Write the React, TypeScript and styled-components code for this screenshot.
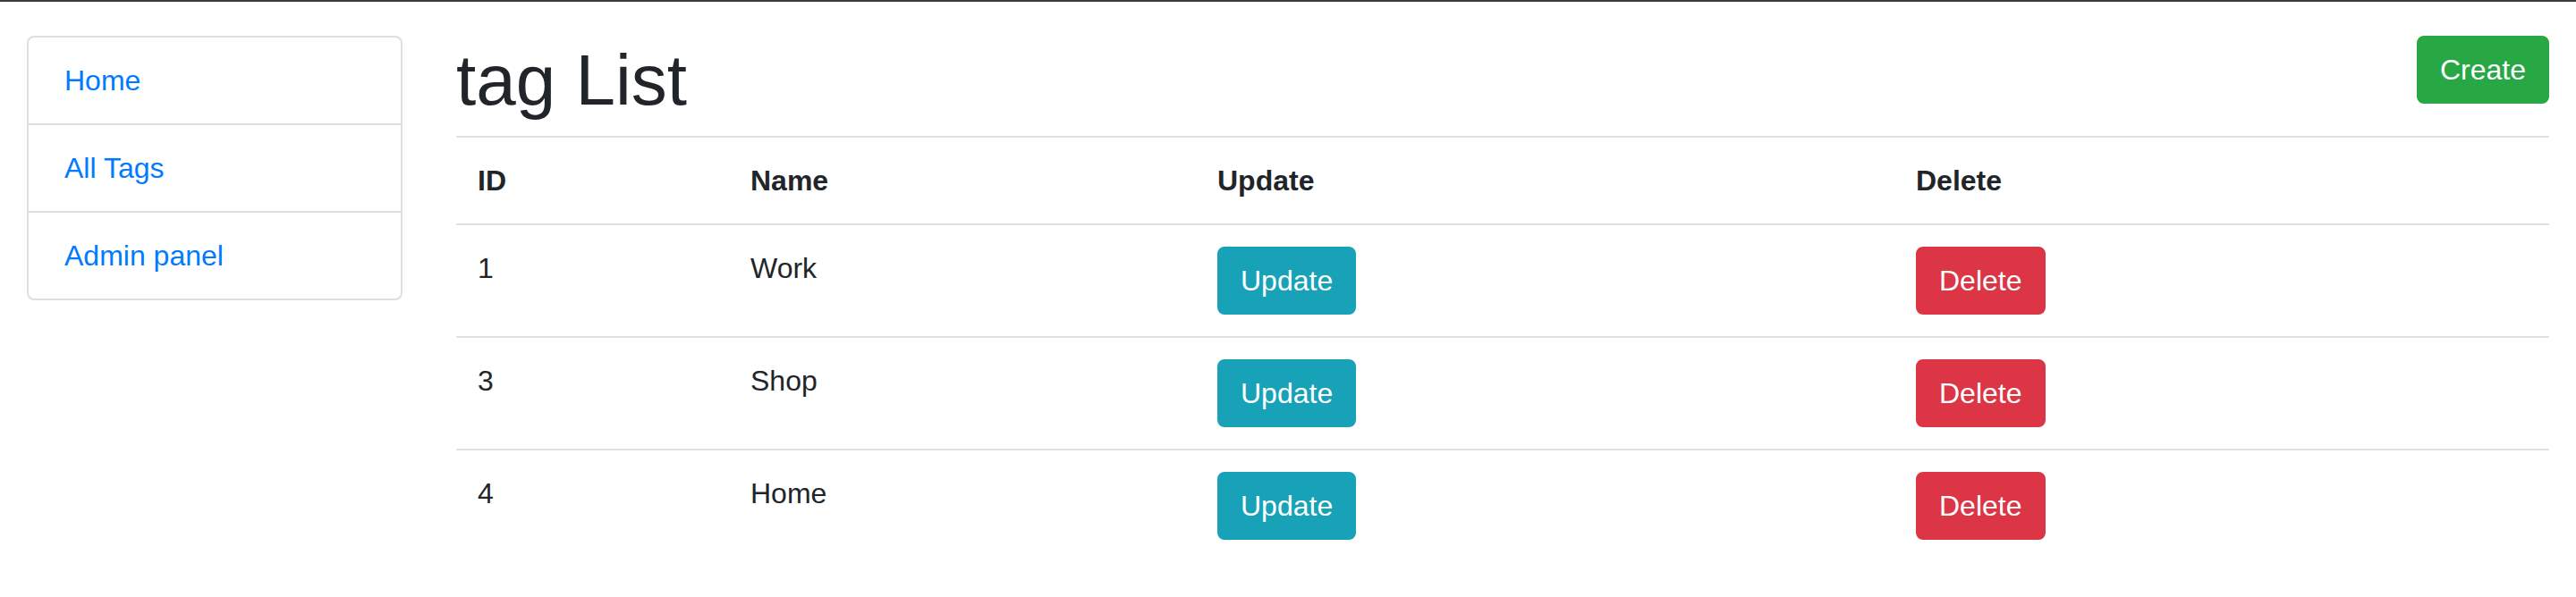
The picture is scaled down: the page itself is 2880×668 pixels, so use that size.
import React from "react";
import styled, { createGlobalStyle } from "styled-components";

const GlobalStyle = createGlobalStyle`
  html, body {
    margin: 0;
    padding: 0;
    background: #ffffff;
  }
  body {
    font-family: "Liberation Sans", Arial, sans-serif;
    font-size: 32px;
    line-height: 1.5;
    color: #212529;
  }
  * { box-sizing: border-box; }
`;

const TopLine = styled.div`
  height: 2px;
  background: #3a3a3a;
`;

const Container = styled.div`
  display: flex;
  align-items: flex-start;
  gap: 60px;
  padding: 38px 30px 0 30px;
`;

const Sidebar = styled.nav`
  width: 420px;
  flex: 0 0 420px;
  display: flex;
  flex-direction: column;
  border: 2px solid #dfdfdf;
  border-radius: 8px;
`;

const NavItem = styled.a<{ $last?: boolean }>`
  display: block;
  padding: 24px 40px;
  line-height: 48px;
  font-size: 32px;
  color: #007bff;
  text-decoration: none;
  border-bottom: ${(p) => (p.$last ? "none" : "2px solid #dfdfdf")};
`;

const Main = styled.main`
  flex: 1;
  min-width: 0;
  display: flex;
  flex-direction: column;
`;

const HeaderBar = styled.div`
  display: flex;
  justify-content: space-between;
  align-items: flex-start;
  margin-bottom: 16px;
`;

const Title = styled.h1`
  margin: 0;
  padding-top: 3px;
  font-size: 80px;
  line-height: 93px;
  font-weight: 500;
  color: #212529;
`;

const Button = styled.button<{ $variant: "success" | "info" | "danger" }>`
  display: inline-block;
  font-family: "Liberation Sans", Arial, sans-serif;
  font-size: 32px;
  line-height: 48px;
  padding: 12px 24px;
  color: #ffffff;
  border-radius: 8px;
  cursor: pointer;
  background: ${(p) =>
    p.$variant === "success" ? "#28a745" : p.$variant === "info" ? "#17a2b8" : "#dc3545"};
  border: 2px solid
    ${(p) =>
      p.$variant === "success" ? "#28a745" : p.$variant === "info" ? "#17a2b8" : "#dc3545"};
`;

const Table = styled.table`
  width: 100%;
  border-collapse: collapse;
  table-layout: fixed;
`;

const Th = styled.th`
  text-align: left;
  font-weight: 700;
  padding: 24px;
  line-height: 48px;
  vertical-align: bottom;
  border-top: 2px solid #dee2e6;
  border-bottom: 2px solid #dee2e6;
`;

const Td = styled.td`
  padding: 24px;
  line-height: 48px;
  vertical-align: top;
  border-top: 2px solid #dee2e6;
`;

const rows = [
  { id: 1, name: "Work" },
  { id: 3, name: "Shop" },
  { id: 4, name: "Home" },
];

export default function App() {
  return (
    <>
      <GlobalStyle />
      <TopLine />
      <Container>
        <Sidebar>
          <NavItem href="#">Home</NavItem>
          <NavItem href="#">All Tags</NavItem>
          <NavItem href="#" $last>
            Admin panel
          </NavItem>
        </Sidebar>
        <Main>
          <HeaderBar>
            <Title>tag List</Title>
            <Button $variant="success">Create</Button>
          </HeaderBar>
          <Table>
            <colgroup>
              <col style={{ width: 305 }} />
              <col style={{ width: 522 }} />
              <col style={{ width: 781 }} />
              <col />
            </colgroup>
            <thead>
              <tr>
                <Th>ID</Th>
                <Th>Name</Th>
                <Th>Update</Th>
                <Th>Delete</Th>
              </tr>
            </thead>
            <tbody>
              {rows.map((r) => (
                <tr key={r.id}>
                  <Td>{r.id}</Td>
                  <Td>{r.name}</Td>
                  <Td>
                    <Button $variant="info">Update</Button>
                  </Td>
                  <Td>
                    <Button $variant="danger">Delete</Button>
                  </Td>
                </tr>
              ))}
            </tbody>
          </Table>
        </Main>
      </Container>
    </>
  );
}
